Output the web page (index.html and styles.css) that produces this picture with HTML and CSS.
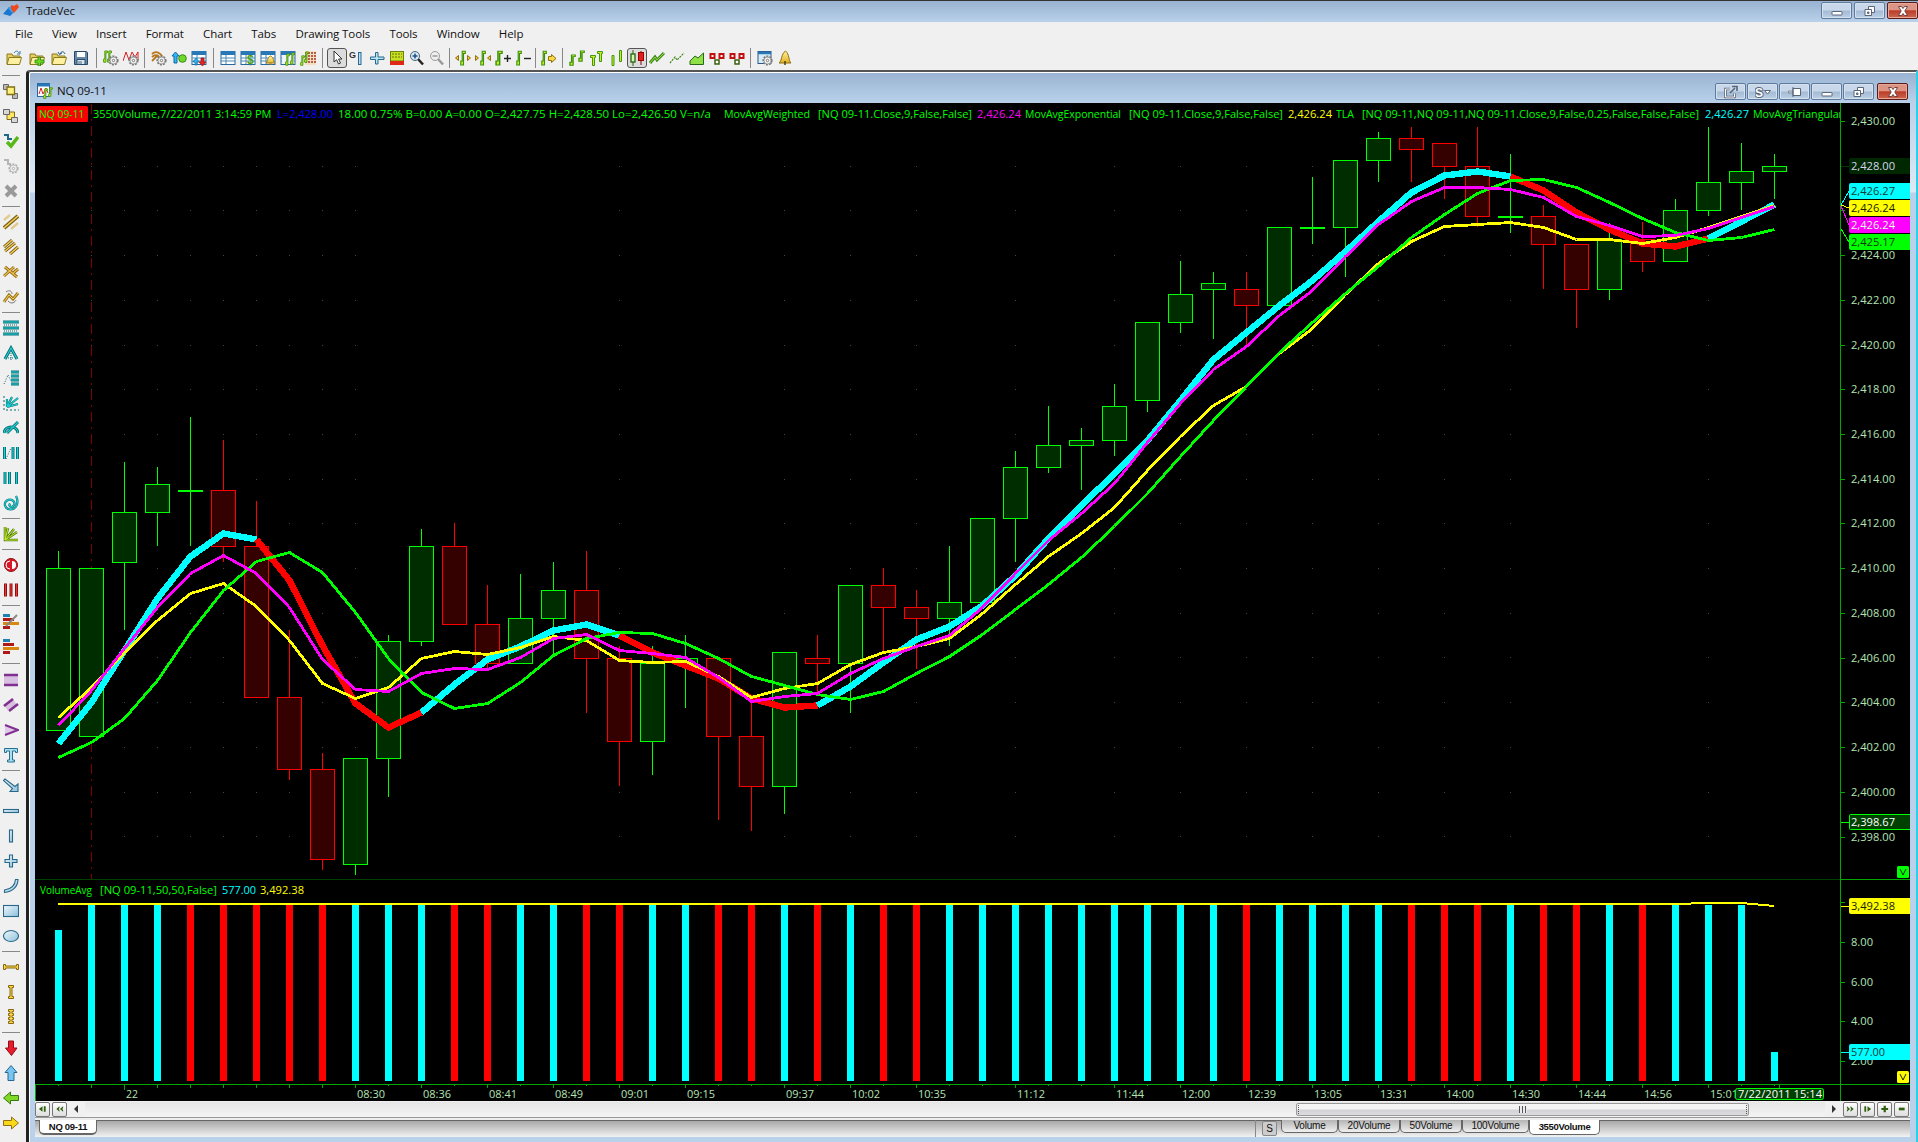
FILE: index.html
```
<!DOCTYPE html>
<html>
<head>
    <meta charset="utf-8">
    <title>TradeVec</title>
    <link rel="stylesheet" href="styles.css">
</head>

<body>
<svg class="defs">
    <linearGradient id="gold" x1="0" y1="0" x2="0" y2="1"><stop offset="0" stop-color="#fff2a0"/><stop offset="1" stop-color="#e0b020"/></linearGradient>
    <linearGradient id="ice" x1="0" y1="0" x2="1" y2="1"><stop offset="0" stop-color="#f0f8fc"/><stop offset="1" stop-color="#8cc0dc"/></linearGradient>
    <symbol id="folder" viewBox="0 0 16 16"><path d="M1 14V4h5l1 2h7v2" fill="#e8d060" stroke="#8a7a20"/><path d="M1 14.5L3 7.5h12.5L13.5 14.5z" fill="#fff0a0" stroke="#8a7a20"/></symbol>
    <symbol id="gear" viewBox="0 0 16 16"><circle cx="10.5" cy="10.5" r="4.3" fill="#eee" stroke="#777" stroke-width="1.6" stroke-dasharray="2 1.1"/><circle cx="10.5" cy="10.5" r="3.5" fill="#f4f4f4" stroke="#888" stroke-width=".8"/><circle cx="10.5" cy="10.5" r="1.2" fill="#fff" stroke="#777"/></symbol>
    <symbol id="bar" viewBox="0 0 6 16" preserveAspectRatio="none"><path d="M.8 11V15h2.700V3.500H5.300V1.200H2.200V11z" fill="#c8f020" stroke="#3c9010" stroke-width="1.100"/></symbol>
    <symbol id="grid" viewBox="0 0 16 16"><rect x="1" y="1.500" width="14" height="13" fill="#fff" stroke="#2868a0"/><rect x="1" y="1" width="14" height="4" fill="#2878b8"/><path d="M1 8h14M1 11h14M6 5v9" stroke="#4888b8"/></symbol>
    <symbol id="min" viewBox="0 0 16 14"><rect x="3" y="7.500" width="10" height="3.500" rx=".5" fill="#fff" stroke="#5a6578"/></symbol>
    <symbol id="restore" viewBox="0 0 16 14"><path d="M6.500 2.500h6v6h-6z" fill="#fff" stroke="#5a6578"/><path d="M3 5.500h6.500v6H3z" fill="#fff" stroke="#5a6578"/><path d="M5.500 8h1.500v1.500H5.500z" fill="#b8cce0" stroke="#5a6578"/></symbol>
    <symbol id="close" viewBox="0 0 16 14"><path d="M3.500 2.500h3L8 4.500l1.500-2h3L9.800 7l2.700 4.500h-3L8 9.500l-1.500 2h-3L6.200 7z" fill="#fff" stroke="#653838" stroke-width=".9"/></symbol>
</svg>

<div class="app">
    <div class="titlebar">
        <svg class="logo" viewBox="0 0 17 14"><path d="M1 11l6-7 6 4-5 5-3-1z" fill="#1878d0"/><path d="M6 5l3-2 4 5-3 2z" fill="#38a0f0"/><path d="M9 2l3 1 3-2 2 3-5 6-3-4z" fill="#f04818"/></svg>
        <span class="title">TradeVec</span>
        <span class="wbtn"><svg><use href="#min"/></svg></span>
        <span class="wbtn"><svg><use href="#restore"/></svg></span>
        <span class="wbtn red"><svg><use href="#close"/></svg></span>
    </div>

    <div class="menu">
        <span>File</span><span>View</span><span>Insert</span><span>Format</span><span>Chart</span><span>Tabs</span><span>Drawing Tools</span><span>Tools</span><span>Window</span><span>Help</span>
    </div>

    <div class="toolbar">
        <i class="wide"><svg viewBox="0 0 16 16"><use href="#folder"/><path d="M8 3c2-3 4-2 5 0m1-2v3h-3" fill="none" stroke="#3878a8"/></svg></i>
        <i class="wide"><svg viewBox="0 0 16 16"><use href="#folder"/><path d="M9 7h2.500v3H15v3h-3.500v3H9v-3H6v-3h3z" fill="#68d820" stroke="#288010" stroke-width=".8"/></svg></i>
        <i class="wide"><svg viewBox="0 0 16 16"><use href="#folder"/><path d="M14 4c-1-3-4-3-5 0m-2-2l1.500 2.500L11 3" fill="none" stroke="#285888"/></svg></i>
        <i class="wide"><svg viewBox="0 0 16 16"><path d="M1.500 1.500h12l1 1v12h-13z" fill="#6888a8" stroke="#284868"/><path d="M4 2h8v5H4z" fill="#fff"/><path d="M4 9.500h8v5H4z" fill="#dde8f0" stroke="#284868"/><path d="M6 11v3M8 11v3" stroke="#486888"/></svg></i>
        <b></b>
        <i><svg viewBox="0 0 16 16"><use href="#bar" x="0" width="5" height="13"/><use href="#bar" x="4" width="5" height="13"/><use href="#gear"/></svg></i>
        <i><svg viewBox="0 0 16 16"><path d="M0 11L3 2l3 8 3-8 3 5 3-5v8" fill="none" stroke="#d82020"/><use href="#gear"/></svg></i>
        <b></b>
        <i><svg viewBox="0 0 16 16"><path d="M1 4c4-4 9-1 11 4M1 7c3-3 6-2 8 1M1 11l6-6" fill="none" stroke="#b87820" stroke-width="1.800"/><use href="#gear"/></svg></i>
        <i><svg viewBox="0 0 16 16"><path d="M4.500 2L8 6H6v7H3V6H1z" fill="#30b8f0" stroke="#1068a8"/><circle cx="11.500" cy="8.500" r="3.800" fill="#70d828" stroke="#388810"/></svg></i>
        <i><svg viewBox="0 0 16 16"><use href="#grid"/><path d="M5 8l3 4H6v3H4v-3H2z" fill="#30b8f0" stroke="#1068a8" stroke-width=".7"/><path d="M10 8h3v4h2l-3.500 4L8 12h2z" fill="#e82020" stroke="#901010" stroke-width=".7"/></svg></i>
        <b class="w"></b>
        <i><svg viewBox="0 0 16 16"><use href="#grid"/></svg></i>
        <i><svg viewBox="0 0 16 16"><use href="#grid"/><text x="7" y="14" class="gl dollar">$</text></svg></i>
        <i><svg viewBox="0 0 16 16"><use href="#grid"/><path d="M6 13c2-1 1-6 4.500-7 3.500 1 2.500 6 4.500 7zM9 14h3" fill="url(#gold)" stroke="#a07810"/></svg></i>
        <i><svg viewBox="0 0 16 16"><use href="#grid"/><rect x="2" y="5" width="12" height="9" fill="#eef4f8"/><use href="#bar" x="5" y="3" width="5" height="13"/><use href="#bar" x="10" y="2" width="5" height="13"/></svg></i>
        <i><svg viewBox="0 0 16 16"><path d="M5 1h11v14H5z" fill="#f4e0c0"/><path d="M5 3h11M5 6h11M5 9h11M5 12h11" stroke="#a83020" stroke-width="1.500" stroke-dasharray="2 1"/><use href="#bar" x="0" y="5" width="5" height="11"/><use href="#bar" x="4" y="1" width="5" height="12"/></svg></i>
        <b class="w"></b>
        <i class="on"><svg viewBox="0 0 16 16"><path d="M5 1v11l2.600-2.300L9.500 14l2-.9-1.900-4.100H13z" fill="#fff" stroke="#333"/></svg></i>
        <i><svg viewBox="0 0 16 16"><text x="0" y="8" class="gl">G</text><rect x="9.500" y="2.500" width="2.500" height="12" fill="#c0dcf0" stroke="#286890"/></svg></i>
        <i><svg viewBox="0 0 16 16"><path d="M6.500 2.500h2.500v4.500h6v2.500h-6v4.500H6.500V9.500H1.500V7h5z" fill="#b8e4f4" stroke="#28688c"/></svg></i>
        <i><svg viewBox="0 0 16 16"><rect x="1.500" y="1.500" width="13" height="9.500" fill="#c8e020" stroke="#688010"/><path d="M3 4h10M3 7h10" stroke="#607010" stroke-dasharray="2 1"/><rect x="1" y="11" width="14" height="4" fill="#e02818"/></svg></i>
        <i><svg viewBox="0 0 16 16"><path d="M9 9l5 5.500" stroke="#222" stroke-width="2.500"/><circle cx="6" cy="6" r="4.500" fill="#d8ecf8" stroke="#486070"/><path d="M3.500 6h5M6 3.500v5" stroke="#205080" stroke-width="1.500"/></svg></i>
        <i><svg viewBox="0 0 16 16"><path d="M9 9l5 5.500" stroke="#999" stroke-width="2.500"/><circle cx="6" cy="6" r="4.500" fill="#eee" stroke="#999"/><path d="M3.500 6h5" stroke="#999" stroke-width="1.500"/></svg></i>
        <b class="s"></b>
        <i><svg viewBox="0 0 16 16"><path d="M3.500 5.500v5L.5 8zM12.500 5.500v5l3-2.500z" fill="#f0c830" stroke="#907010"/><use href="#bar" x="5" width="6" height="16"/></svg></i>
        <i><svg viewBox="0 0 16 16"><path d="M.5 5.500v5L3.500 8zM15.500 5.500v5l-3-2.500z" fill="#f0c830" stroke="#907010"/><use href="#bar" x="5" width="6" height="16"/></svg></i>
        <i><svg viewBox="0 0 16 16"><use href="#bar" x="0" width="8" height="16"/><path d="M9 8.500h7M12.500 5v7" stroke="#222" stroke-width="1.400"/></svg></i>
        <i><svg viewBox="0 0 16 16"><use href="#bar" x="1" width="6" height="16"/><path d="M9 8.500h7" stroke="#222" stroke-width="1.400"/></svg></i>
        <b class="s"></b>
        <i><svg viewBox="0 0 16 16"><use href="#bar" x="0" width="6" height="16"/><path d="M7.500 6.500h3v-2l4.500 4-4.500 4v-2h-3z" fill="#f8d840" stroke="#907010"/></svg></i>
        <b></b>
        <i><svg viewBox="0 0 16 16"><use href="#bar" x="0" y="4" width="7" height="12"/><use href="#bar" x="9" y="0" width="7" height="12"/></svg></i>
        <i><svg viewBox="0 0 16 16"><path d="M1.500 5.500h5v2h-1v8H3.500v-8h-2zM8.500 1.500h5v2h-1v8h-2v-8h-2z" fill="#c8f020" stroke="#409810"/></svg></i>
        <i><svg viewBox="0 0 16 16"><path d="M3 5.500h2v10H3zM10.500.5h2v11h-2z" fill="#c8f020" stroke="#409810"/></svg></i>
        <i class="on"><svg viewBox="0 0 16 16"><path d="M4 0v16" stroke="#286010"/><rect x="2" y="4" width="4" height="8" fill="#d8f8b0" stroke="#286010" stroke-width="1.300"/><path d="M12 1v14" stroke="#800"/><rect x="9.500" y="2.500" width="5" height="8" fill="#e02020" stroke="#900"/></svg></i>
        <i><svg viewBox="0 0 16 16"><path d="M1 13l5-6 2 3 7-7" fill="none" stroke="#408818" stroke-width="3"/><path d="M1 13l5-6 2 3 7-7" fill="none" stroke="#90e040"/></svg></i>
        <i><svg viewBox="0 0 16 16"><path d="M1 13l5-6 2 3 7-7" fill="none" stroke="#408818" stroke-width="1.200" stroke-dasharray="2 1"/></svg></i>
        <i><svg viewBox="0 0 16 16"><path d="M1 14.500V11l5-5 3 2 5.500-5v11.500z" fill="#90e048" stroke="#286818"/></svg></i>
        <i><svg viewBox="0 0 16 16"><path d="M1.500 4h4v4h-4zM10.500 4h4v4h-4z" fill="#fff" stroke="#c01010" stroke-width="2"/><path d="M6 10h4v4H6z" fill="#fff" stroke="#386010" stroke-width="1.500"/></svg></i>
        <i><svg viewBox="0 0 16 16"><path d="M1.500 4h4v4h-4zM10.500 4h4v4h-4z" fill="#fff" stroke="#c01010" stroke-width="2"/><path d="M6 10h4v4H6z" fill="#fff" stroke="#386010" stroke-width="1.500"/></svg></i>
        <b></b>
        <i><svg viewBox="0 0 16 16"><rect x="1" y="1.500" width="13" height="12" fill="#d8ecf8" stroke="#285888"/><path d="M1 3h13" stroke="#2878b8" stroke-width="2.500"/><use href="#gear"/></svg></i>
        <i><svg viewBox="0 0 16 16"><path d="M2 13c3-2 2-9 6.500-12 4 3 3 10 5.500 12z" fill="url(#gold)" stroke="#907010"/><path d="M8 11v4" stroke="#504010" stroke-width="1.500"/></svg></i>
    </div>

    <div class="main">
        <div class="side">
            <b></b>
            <i><svg viewBox="0 0 16 16"><path d="M.5 1.500h5v5h-5zM9.500 10.500h5v5h-5z" fill="#bbb" stroke="#666"/><path d="M4 4h7.500v7.500H4z" fill="#fff080" stroke="#807010" stroke-width="1.300"/></svg></i>
            <i><svg viewBox="0 0 16 16"><path d="M4 4h7.500v7.500H4z" fill="#ffe860" stroke="#807010"/><path d="M.5 1.500h6v5h-6zM8.500 9.500h6v5h-6z" fill="#d8d8d8" stroke="#666"/></svg></i>
            <i><svg viewBox="0 0 16 16"><path d="M1 2h4v4h4" fill="none" stroke="#206888" stroke-width="2"/><path d="M4 9l4 4 7-9" fill="none" stroke="#58b818" stroke-width="3.500"/></svg></i>
            <i class="off"><svg viewBox="0 0 16 16"><path d="M1 2h4v4h3" fill="none" stroke="#888" stroke-width="2"/><use href="#gear"/></svg></i>
            <i><svg viewBox="0 0 16 16"><path d="M3 3l10 10M13 3L3 13" stroke="#999" stroke-width="4"/></svg></i>
            <b></b>
            <i><svg viewBox="0 0 16 16"><path d="M1 6l6-5M8 15l7-6" stroke="#e0cc90" stroke-width="2.500"/><path d="M1 14L15 2" stroke="#806010" stroke-width="4"/><path d="M1 14L15 2" stroke="#f0d060" stroke-width="1.500"/></svg></i>
            <i><svg viewBox="0 0 16 16"><path d="M1 8l8-7M2 12l10-8M7 15l8-7" stroke="#806010" stroke-width="3"/><path d="M1 8l8-7M2 12l10-8M7 15l8-7" stroke="#f0d060" stroke-width="1.200"/></svg></i>
            <i><svg viewBox="0 0 16 16"><path d="M2 3l12 10M1 12l10-9M9 10l6-5" stroke="#906810" stroke-width="3"/><path d="M2 3l12 10M1 12l10-9M9 10l6-5" stroke="#e8c050" stroke-width="1.200"/></svg></i>
            <i><svg viewBox="0 0 16 16"><path d="M1 13l5-7 4 4 5-6" fill="none" stroke="#a07818" stroke-width="3"/><path d="M1 13l5-7 4 4 5-6" fill="none" stroke="#f0d060"/><path d="M3 3c4-3 6 0 6 2M5 12c4 4 7 1 8-1" fill="none" stroke="#777"/></svg></i>
            <b></b>
            <i><svg viewBox="0 0 16 16"><path d="M0 2h16M0 8h16M0 14h16" class="o"/><path d="M0 2h16M0 8h16M0 14h16" class="n"/><path d="M1 5h14M1 11h14" stroke="#086870" stroke-dasharray="1 1"/></svg></i>
            <i><svg viewBox="0 0 16 16"><path d="M2 14L8 3l6 11" class="o"/><path d="M2 14L8 3l6 11" class="n"/><path d="M8 8v7M5 13h6" stroke="#086870" stroke-dasharray="1 1"/></svg></i>
            <i><svg viewBox="0 0 16 16"><path d="M8 2h8M8 6h8M8 10h8M8 14h8" class="o"/><path d="M8 2h8M8 6h8M8 10h8M8 14h8" class="n"/><path d="M1 14l4-9 3 6" fill="none" stroke="#086870" stroke-dasharray="1 1.500"/></svg></i>
            <i><svg viewBox="0 0 16 16"><path d="M4 12V4M4 12l5-10M4 12L15 3M4 12l11-3" class="o thin"/><path d="M4 12V4M4 12l5-10M4 12L15 3M4 12l11-3" class="n"/><path d="M1 1v14h15" fill="none" stroke="#086870" stroke-dasharray="2 2"/></svg></i>
            <i><svg viewBox="0 0 16 16"><path d="M1 13c1-8 13-8 14 0M4 13L15 2" class="o"/><path d="M1 13c1-8 13-8 14 0M4 13L15 2" class="n"/></svg></i>
            <i><svg viewBox="0 0 16 16"><path d="M1.500 2v12M10 2v12M14.500 2v12" class="o"/><path d="M1.500 2v12M10 2v12M14.500 2v12" class="n"/><path d="M3 14l5-11" stroke="#086870" stroke-dasharray="1 1.500"/></svg></i>
            <i><svg viewBox="0 0 16 16"><path d="M2 2v12M6.500 2v12M13.500 2v12" class="o"/><path d="M2 2v12M6.500 2v12M13.500 2v12" class="n"/></svg></i>
            <i><svg viewBox="0 0 16 16"><path d="M13 1c3.500 7 0 13.500-5.500 13.500S0 8 4 5.500s9 1 7 4.500-6 1.500-4-1.500" class="o thin"/><path d="M13 1c3.500 7 0 13.500-5.500 13.500S0 8 4 5.500s9 1 7 4.500-6 1.500-4-1.500" class="n"/></svg></i>
            <b></b>
            <i><svg viewBox="0 0 16 16"><path d="M2 1v13h13M2 14L5 2M2 14l9-11M2 14l12-8" fill="none" stroke="#508010" stroke-width="2.500"/><path d="M2 1v13h13M2 14L5 2M2 14l9-11M2 14l12-8" fill="none" stroke="#c8e830"/></svg></i>
            <b></b>
            <i><svg viewBox="0 0 16 16"><circle cx="8" cy="8" r="6.500" fill="#d81828" stroke="#901010"/><path d="M9 4a4 4 0 0 1 0 8z" fill="#fff"/><path d="M7 4a4 4 0 0 0 0 8" fill="none" stroke="#fff"/></svg></i>
            <i><svg viewBox="0 0 16 16"><path d="M2.500 1.500v13M8 1.500v13M13.500 1.500v13" stroke="#901010" stroke-width="3"/><path d="M2.500 2v12M8 2v12M13.500 2v12" stroke="#e83838"/></svg></i>
            <b></b>
            <i><svg viewBox="0 0 16 16"><path d="M0 2.500h7" stroke="#2080b0" stroke-width="3"/><path d="M0 6.500h11M0 14.500h7" stroke="#b01818" stroke-width="3"/><path d="M0 10.500h16" stroke="#d88810" stroke-width="3"/><path d="M3 13L14 2" stroke="#888" stroke-width="2"/></svg></i>
            <i><svg viewBox="0 0 16 16"><path d="M0 2.500h7" stroke="#2080b0" stroke-width="3"/><path d="M0 6.500h11M0 14.500h7" stroke="#b01818" stroke-width="3"/><path d="M0 10.500h16" stroke="#d88810" stroke-width="3"/></svg></i>
            <b class="l"></b>
            <i><svg viewBox="0 0 16 16"><path d="M1 3h14v10H1z" fill="#d8c0e0"/><path d="M1 3h14M1 13h14" stroke="#803090" stroke-width="2.500"/></svg></i>
            <i><svg viewBox="0 0 16 16"><path d="M3 11l9-6" stroke="#d8c0e0" stroke-width="6"/><path d="M1 9l9-7M6 14l9-7" stroke="#803090" stroke-width="2.600"/></svg></i>
            <i><svg viewBox="0 0 16 16"><path d="M2 3l13 5-13 5" fill="#e0c8e8" stroke="#803090" stroke-width="2"/></svg></i>
            <i><svg viewBox="0 0 16 16"><path d="M1.500 1.500h13v4h-2v-1.500H9.500v9h2v2h-7v-2h2V4H3.500v1.500h-2z" fill="#a8e0f0" stroke="#287090"/></svg></i>
            <b></b>
            <i class="blue"><svg viewBox="0 0 16 16"><path d="M2 1L.5 2.500l9 8-2.500 3h8V6l-3 2.500z"/></svg></i>
            <i class="blue"><svg viewBox="0 0 16 16"><rect x=".5" y="6.500" width="15" height="3"/></svg></i>
            <i class="blue"><svg viewBox="0 0 16 16"><rect x="6.500" y="2" width="3" height="12"/></svg></i>
            <i class="blue"><svg viewBox="0 0 16 16"><path d="M6.500 2h3v4.500H14v3H9.500V14h-3V9.500H2v-3h4.500z"/></svg></i>
            <i class="blue"><svg viewBox="0 0 16 16"><path d="M12.500 1.500h2.500C15 9 9 14 1.500 14.500v-2.500C8 11 12 8 12.500 1.500z"/></svg></i>
            <i class="blue"><svg viewBox="0 0 16 16"><rect x=".5" y="2.500" width="15" height="11"/></svg></i>
            <i class="blue"><svg viewBox="0 0 16 16"><ellipse cx="8" cy="8" rx="7.500" ry="5.500"/></svg></i>
            <b></b>
            <i class="gold"><svg viewBox="0 0 16 16"><path d="M.5 5.500h2v1.500h11V5.500h2v5h-2V9h-11v1.500h-2z"/></svg></i>
            <i class="gold"><svg viewBox="0 0 16 16"><path d="M5.500 1.500h5v2H9v9h1.500v2h-5v-2H7v-9H5.500z"/></svg></i>
            <i class="gold"><svg viewBox="0 0 16 16"><path d="M5.500.5h5v2H9v2h1.500v2H9v2h1.500v2H9v2h1.500v2h-5v-2H7v-2H5.500v-2H7v-2H5.500v-2H7v-2H5.500z"/></svg></i>
            <b></b>
            <i><svg viewBox="0 0 16 16"><path d="M5.500 1h5v7H14l-5.500 7.500L2.500 8h3z" fill="#e81c2c" stroke="#901018"/></svg></i>
            <i><svg viewBox="0 0 16 16"><path d="M8 .5l6 7h-3v8H5v-8H2z" fill="#78c4f0" stroke="#286890"/></svg></i>
            <i><svg viewBox="0 0 16 16"><path d="M.5 8l7-6v3.500h8v5h-8V14z" fill="#80d828" stroke="#387810"/></svg></i>
            <i><svg viewBox="0 0 16 16"><path d="M15.500 8l-7-6v3.500h-8v5h8V14z" fill="#f8d818" stroke="#907010"/></svg></i>
        </div>

        <div class="child">
            <div class="childbar">
                <svg class="chartlogo" viewBox="0 0 16 16"><rect x=".5" y=".5" width="12" height="13" fill="#fff" stroke="#2868a0"/><path d="M1 2h12" stroke="#2878b8" stroke-width="3"/><path d="M2 11l2-6 2 6 3-6 2 5" fill="none" stroke="#d82020"/><use href="#bar" x="6" y="5" width="5" height="11"/><use href="#bar" x="11" y="4" width="5" height="10"/></svg>
                <span class="title">NQ 09-11</span>
                <span class="wbtn"><svg viewBox="0 0 16 14"><path d="M7 4H2.500v8h9V8.500" fill="none" stroke="#5a6578" stroke-width="2.500"/><path d="M7 4H2.500v8h9V8.500" fill="none" stroke="#fff"/><path d="M7 8l5-5M9 1.500h5V6" fill="none" stroke="#5a6578" stroke-width="1.600"/></svg></span>
                <span class="wbtn"><svg viewBox="0 0 16 14"><text x="0" y="11.500" class="s-glyph">S</text><path d="M9.500 5.500h6l-3 3.500z" fill="#fff" stroke="#5a6578"/></svg></span>
                <span class="wbtn"><svg viewBox="0 0 16 14"><path d="M1 7h5" stroke="#5a6578" stroke-width="2.500"/><path d="M1.500 7h5" stroke="#fff"/><path d="M6 3.500h7.500v7H6z" fill="#fff" stroke="#5a6578"/><path d="M6 2v10" stroke="#5a6578"/></svg></span>
                <span class="wbtn"><svg><use href="#min"/></svg></span>
                <span class="wbtn"><svg><use href="#restore"/></svg></span>
                <span class="wbtn red"><svg><use href="#close"/></svg></span>
            </div>

            <svg id="chart" viewBox="35 103 1875 998"></svg>

            <div class="scroll">
                <span class="nav"><svg viewBox="0 0 10 8"><path d="M5 1v6L1 4zM6.500 1h2v6h-2z"/></svg></span>
                <span class="nav"><svg viewBox="0 0 10 8"><path d="M5 1L1.500 4 5 7V5L4 4l1-1zM9 1L5.500 4 9 7V5L8 4l1-1z"/></svg></span>
                <svg class="arrow" viewBox="0 0 6 8"><path d="M5 0v8L1 4z"/></svg>
                <span class="track"><span class="thumb"><em></em><u></u><em></em></span></span>
                <svg class="arrow" viewBox="0 0 6 8"><path d="M1 0v8l4-4z"/></svg>
                <span class="nav"><svg viewBox="0 0 10 8"><path d="M1 1l3.500 3L1 7V5l1-1-1-1zM5 1l3.500 3L5 7V5l1-1-1-1z"/></svg></span>
                <span class="nav"><svg viewBox="0 0 10 8"><path d="M1.500 1h2v6h-2zM5 1v6l4-3z"/></svg></span>
                <span class="nav"><svg viewBox="0 0 10 8"><path d="M4 .5h2.500V3H9v2H6.500v2.500H4V5H1.500V3H4z"/></svg></span>
                <span class="nav"><svg viewBox="0 0 10 8"><path d="M2 2.500h6.500v3H2z"/></svg></span>
            </div>

            <div class="tabs">
                <span class="tab active first">NQ 09-11</span>
                <span class="split"></span>
                <span class="sbtn">S</span>
                <span class="tab t1">Volume</span>
                <span class="tab t2">20Volume</span>
                <span class="tab t2">50Volume</span>
                <span class="tab t3">100Volume</span>
                <span class="tab active t4">3550Volume</span>
            </div>
        </div>
    </div>
</div>
<script src="chart.js"></script>
</body>
</html>
```
FILE: styles.css
```
body {
    margin: 0;
    background: #f0f0f0;
    font-family: "Open Sans", "Noto Sans", sans-serif;
    font-size: 11.5px;
    color: #111;
    overflow: hidden;
}

.defs {
    position: absolute;
    width: 0;
    height: 0;
}

.app {
    width: 1918px;
    height: 1142px;
    display: flex;
    flex-direction: column;
}

.titlebar {
    height: 21px;
    flex: none;
    border-top: 1px solid #333;
    background: linear-gradient(#98b2d0, #b9d1ea);
    display: flex;
    align-items: flex-start;
    gap: 2px;
}

.logo {
    width: 17px;
    height: 14px;
    margin: 2px 5px 0 2px;
}

.title {
    flex: 1;
    font-size: 11.5px;
    line-height: 20px;
    letter-spacing: -0.1px;
}

.wbtn {
    width: 29px;
    height: 15px;
    margin-top: 1px;
    border: 1px solid #5f7a9c;
    border-radius: 2px;
    box-shadow: inset 0 0 0 1px #d4e2f0;
    background: linear-gradient(#c8d8ea 48%, #a3bad4 52%, #bdd1e6);
    display: flex;
    justify-content: center;
    align-items: center;
}

.wbtn svg {
    width: 16px;
    height: 14px;
}

.red {
    border-color: #5c1a1a;
    box-shadow: inset 0 0 0 1px #e8a898;
    background: linear-gradient(#dc9484 45%, #bc3c28 52%, #cc6850);
}

.s-glyph {
    font: bold 12px "Liberation Sans", sans-serif;
    fill: #fff;
    stroke: #5a6578;
    stroke-width: 2px;
    paint-order: stroke;
}

.menu {
    height: 23px;
    flex: none;
    display: flex;
    gap: 19.25px;
    padding-left: 15px;
    line-height: 23px;
    letter-spacing: -0.1px;
}

.toolbar {
    height: 25px;
    flex: none;
    display: flex;
    align-items: center;
    padding-left: 3px;
}

.toolbar i {
    width: 20px;
    height: 20px;
    flex: none;
    display: flex;
    align-items: center;
    justify-content: center;
    box-sizing: border-box;
}

.toolbar i.wide { width: 22.4px; }

.toolbar i.on {
    border: 1px solid #555;
    border-radius: 3px;
    background: #dcdcdc;
}

.toolbar svg, .side svg {
    width: 16px;
    height: 16px;
    flex: none;
}

.toolbar b {
    width: 1px;
    height: 20px;
    margin: 0 3.5px;
    background: #888;
}

.toolbar b.s { margin: 0 2.5px; }
.toolbar b.w { margin: 0 4px; }

.gl {
    font: bold 9px "Liberation Sans", sans-serif;
    fill: #333;
}

.dollar {
    font-size: 12px;
    fill: #48a010;
}

.main {
    flex: 1;
    display: flex;
    min-height: 0;
}

.side {
    width: 26px;
    flex: none;
    display: flex;
    flex-direction: column;
    padding-top: 2px;
}

.side i {
    height: 25px;
    flex: none;
    padding-left: 3px;
    display: flex;
    align-items: center;
}

.side b {
    width: 18px;
    height: 1px;
    margin: 2.5px 0 2.5px 2px;
    flex: none;
    background: #888;
}

.side b.l { margin: 5px 0 3px 2px; }
.off { opacity: 0.55; }
.o { fill: none; stroke: #087078; stroke-width: 3; }
.o.thin { stroke-width: 2.2; }
.n { fill: none; stroke: #20d0d0; stroke-width: 1.1; }
.blue svg { fill: url(#ice); stroke: #286888; stroke-width: 1.1; }
.gold svg { fill: #f8d848; stroke: #886810; }

.child {
    flex: 1;
    min-width: 0;
    box-sizing: border-box;
    padding: 0 6px 0 6px;
    border-style: solid;
    border-width: 2px 2px 0 3px;
    border-color: #555 #2ad0e8 #555 #222;
    border-top-left-radius: 4px;
    background: linear-gradient(#98b2d0, #b9d1ea 30px, #dfe9f5 120px, #b9d1ea 121px);
    display: flex;
    flex-direction: column;
    box-shadow: inset 1px 1px 0 #fff;
}

.childbar {
    height: 30px;
    flex: none;
    background: linear-gradient(#9ab4d2, #b9d1ea);
    margin-top: 1px;
    display: flex;
    gap: 1px;
}

.childbar .wbtn { margin-top: 10px; }
.childbar .wbtn:last-child { margin: 10px 2px 0 2px; }

.childbar .title {
    line-height: 35px;
    padding-left: 3px;
}

.chartlogo {
    width: 16px;
    height: 16px;
    margin: 10px 0 0 2px;
}

#chart {
    width: 1875px;
    height: 998px;
    flex: none;
    background: #000;
    display: block;
}

#chart text {
    font-family: "Open Sans", "Noto Sans", sans-serif;
    font-size: 11px;
}

.scroll {
    height: 17px;
    flex: none;
    background: #f0f0f0;
    border-bottom: 1px solid #999;
    display: flex;
    align-items: center;
    gap: 2px;
    box-sizing: border-box;
    padding-right: 1px;
}

.nav {
    width: 13px;
    height: 13px;
    border: 1px solid #777;
    border-radius: 2px;
    background: linear-gradient(#fff, #ddd);
    display: flex;
    align-items: center;
    justify-content: center;
}

.nav svg {
    width: 9px;
    height: 8px;
    fill: #306010;
}

.arrow {
    width: 6px;
    height: 8px;
    margin: 0 4px;
    fill: #333;
}

.track {
    flex: 1;
    background: linear-gradient(#e6e6e6, #f4f4f4);
    height: 15px;
}

.thumb {
    width: 453px;
    height: 13px;
    margin: 1px 0 0 1211px;
    border: 1px solid #999;
    border-radius: 2px;
    background: linear-gradient(#f4f4f4 48%, #d2d2d6 52%, #dcdcde);
    display: flex;
    justify-content: space-between;
    align-items: center;
    box-sizing: border-box;
    padding: 0 1px;
}

.thumb em {
    height: 9px;
    border-left: 1px dotted #555;
}

.thumb u {
    width: 8px;
    height: 7px;
    background: repeating-linear-gradient(90deg, #555 0 1px, #eee 1px 3px);
}

.tabs {
    height: 19px;
    flex: none;
    display: flex;
    box-sizing: border-box;
    border-top: 2px solid #eee;
    padding-left: 4px;
    background: linear-gradient(#a4a4a4, #f2f2f2);
    box-shadow: inset 0 1px 0 #666;
    font: 10px/13px "Liberation Sans", Arial, sans-serif;
    letter-spacing: -0.2px;
}

.tab {
    height: 13px;
    box-sizing: border-box;
    text-align: center;
    background: linear-gradient(#b4b4b4, #f0f0f0);
    border: 1px solid #666;
    border-top: 0;
    border-radius: 0 0 5px 5px;
    line-height: 11px;
}

.active {
    height: 15px;
    line-height: 13px;
    background: #fff;
    font-weight: bold;
    font-size: 9.5px;
    letter-spacing: -0.3px;
}

.first {
    width: 58px;
    border-bottom-width: 2px;
}

.split {
    width: 1158px;
    border-right: 1px solid #888;
}

.sbtn {
    width: 13px;
    height: 13px;
    margin: 1px 4px 0 6px;
    border: 1px solid #888;
    border-radius: 2px;
    background: #ccc;
    text-align: center;
}

.t1 { width: 57px; }
.t2 { width: 62px; }
.t3 { width: 67px; }
.t4 { width: 71px; }
```
FILE: chart.js
```
var svg = document.getElementById('chart');
var NS = 'http://www.w3.org/2000/svg';
var LIME = '#00ff00', RED = '#ff0000', CYAN = '#00ffff', YELLOW = '#ffff00', PINK = '#ff00ff';
var LABEL = '#b4e4b4';

function add(name, attrs, text) {
    var el = document.createElementNS(NS, name);
    for (var k in attrs) el.setAttribute(k, attrs[k]);
    if (text) el.textContent = text;
    svg.appendChild(el);
    return el;
}
function line(x1, y1, x2, y2, color, w) {
    add('line', {x1: x1, y1: y1, x2: x2, y2: y2, stroke: color, 'stroke-width': w || 1, 'shape-rendering': 'crispEdges'});
}
function box(x, y, w, h, fill, stroke) {
    add('rect', {x: x, y: y, width: w, height: h, fill: fill, stroke: stroke || 'none', 'shape-rendering': 'crispEdges'});
}
function label(s, x, y, w, color) {
    add('text', {x: x, y: y, fill: color, textLength: w, lengthAdjust: 'spacingAndGlyphs'}, s);
}
function cx(i) { return 58.5 + 33 * i; }

// color, high, body top, body bottom, low
var candles = [
    ['g',551,568,730,730], ['g',568,568,736,736], ['g',462,512,562,630], ['g',467,484,512,546],
    ['g',417,490,491,546], ['r',440,490,546,562], ['r',501,546,697,697], ['r',630,697,769,780],
    ['r',753,769,859,870], ['g',758,758,864,875], ['g',635,641,758,797], ['g',529,546,641,646],
    ['r',523,546,624,624], ['r',585,624,663,668], ['g',574,618,663,663], ['g',562,590,618,655],
    ['r',551,590,658,713], ['r',646,658,741,786], ['g',646,663,741,775], ['g',635,658,663,708],
    ['r',658,658,736,820], ['r',697,736,786,831], ['g',652,652,786,814], ['r',635,658,663,693],
    ['g',585,585,663,713], ['r',568,585,607,652], ['r',590,607,618,669], ['g',546,602,618,646],
    ['g',518,518,602,602], ['g',451,467,518,562], ['g',406,445,467,473], ['g',428,440,445,490],
    ['g',384,406,440,456], ['g',322,322,400,412], ['g',261,294,322,333], ['g',272,283,289,339],
    ['r',272,289,305,345], ['g',227,227,305,305], ['g',177,227,228,244], ['g',160,160,227,277],
    ['g',132,138,160,182], ['r',127,138,149,182], ['r',143,143,166,199], ['r',127,166,216,227],
    ['g',154,216,217,233], ['r',205,216,244,289], ['r',244,244,289,328], ['g',223,239,289,300],
    ['r',222,239,261,272], ['g',199,210,261,261], ['g',127,182,210,216], ['g',143,171,182,210],
    ['g',154,166,171,199]
];
var ema = [717,687,652,620,593,583,606,640,683,698,687,658,651,654,647,636,640,660,662,661,676,697,688,683,664,652,646,638,613,584,556,533,507,470,436,405,386,353,328,294,263,241,226,224,222,227,239,239,243,237,227,216,205];
var wma = [725,690,648,607,573,555,573,607,659,689,691,673,668,669,657,638,634,650,653,657,677,701,696,693,673,658,646,635,607,573,540,513,483,442,403,369,346,315,290,256,224,201,187,187,189,197,216,225,236,235,228,217,206];
var tri = [757,742,718,680,632,590,561,552,572,612,658,692,708,703,682,655,638,632,633,643,658,676,685,694,699,691,673,656,634,609,584,557,526,493,456,420,386,352,322,293,266,237,214,193,180,179,187,202,218,232,240,237,229];
var tla = [743,702,650,598,556,533,539,580,645,703,727,712,684,659,646,630,624,635,652,665,678,698,707,705,686,662,639,626,605,575,538,505,473,440,400,359,332,305,280,251,221,192,175,171,176,190,212,229,243,246,238,221,204];
var times = {2:'22',9:'08:30',11:'08:36',13:'08:41',15:'08:49',17:'09:01',19:'09:15',22:'09:37',24:'10:02',26:'10:35',29:'11:12',32:'11:44',34:'12:00',36:'12:39',38:'13:05',40:'13:31',42:'14:00',44:'14:30',46:'14:44',48:'14:56',50:'15:01'};

// grid dots
[1,2,3,4,5,6,7,8,9,17,22,24,26,29,32,34,36,38,40,42,44,50].forEach(function (i) {
    for (var n = 1; n < 17; n++) box(cx(i) - .5, Math.round(121 + 44.7 * n), 1, 1, '#444');
});

// session break
add('line', {x1: 91.5, x2: 91.5, y1: 104, y2: 879, stroke: '#800000', 'stroke-dasharray': '10 5 2 5', 'shape-rendering': 'crispEdges'});

candles.forEach(function (c, i) {
    var col = c[0] == 'g' ? LIME : RED, x = cx(i);
    line(x, c[1], x, c[4], col);
    if (c[3] - c[2] < 3) box(x - 12.5, c[2], 25, 2, col);
    else box(x - 12, c[2] + .5, 24, c[3] - c[2], c[0] == 'g' ? '#002d00' : '#350000', col);
});

function curve(data, from, to, color, w) {
    var pts = [];
    for (var i = from; i <= to; i++) pts.push(cx(i) + ',' + (data[i] + .5));
    add('polyline', {points: pts.join(' '), fill: 'none', stroke: color, 'stroke-width': w, 'shape-rendering': 'crispEdges'});
}
[[0,6,CYAN],[6,11,RED],[11,17,CYAN],[17,23,RED],[23,44,CYAN],[44,50,RED],[50,52,CYAN]].forEach(function (s) {
    curve(tla, s[0], s[1], s[2], 6.4);
});
curve(ema, 0, 52, YELLOW, 2.8);
curve(tri, 0, 52, LIME, 2.8);
curve(wma, 0, 52, PINK, 2.8);

// volume
candles.forEach(function (c, i) {
    var top = i == 0 ? 930 : i == 52 ? 1052 : 905;
    box(cx(i) - 3.5, top, 7, 1081 - top, c[0] == 'g' && i != 4 ? CYAN : RED);
});
add('polyline', {points: '58,904 1675,904 1708,903 1741,903 1774,906', fill: 'none', stroke: YELLOW, 'stroke-width': 2, 'shape-rendering': 'crispEdges'});

// header
add('rect', {x: 37, y: 106, width: 51, height: 16, rx: 1.5, fill: RED});
[
    ['NQ 09-11', 39, 45.5, LIME], ['3550Volume,7/22/2011 3:14:59 PM', 93, 178.5, LIME],
    ['L=2,428.00', 277, 56, '#0000ff'],
    ['18.00 0.75% B=0.00 A=0.00 O=2,427.75 H=2,428.50 Lo=2,426.50 V=n/a', 338, 373, LIME],
    ['MovAvgWeighted', 724, 86, LIME], ['[NQ 09-11.Close,9,False,False]', 818, 154, LIME], ['2,426.24', 977, 44, PINK],
    ['MovAvgExponential', 1025, 96, LIME], ['[NQ 09-11.Close,9,False,False]', 1129, 154, LIME], ['2,426.24', 1288, 44, YELLOW],
    ['TLA', 1336, 18, LIME], ['[NQ 09-11,NQ 09-11,NQ 09-11.Close,9,False,0.25,False,False,False]', 1362, 337, LIME],
    ['2,426.27', 1705, 44, CYAN], ['MovAvgTriangular', 1753, 90, LIME]
].forEach(function (t) { label(t[0], t[1], 118, t[2], t[3]); });
box(1840, 103, 70, 776, '#000');
label('VolumeAvg', 40, 894, 52, LIME);
label('[NQ 09-11,50,50,False]', 100, 894, 117, LIME);
label('577.00', 222, 894, 34, CYAN);
label('3,492.38', 260, 894, 44, YELLOW);

// axes
var AXIS = '#00a800';
line(35, 879.5, 1840, 879.5, '#004000');
line(1840, 879.5, 1910, 879.5, AXIS);
line(1840.5, 103, 1840.5, 1101, AXIS);
line(35, 1084.5, 1910, 1084.5, AXIS);
line(35.5, 1084, 35.5, 1101, AXIS);
for (var p = 2430; p >= 2398; p -= 2) {
    var y = Math.round(121 + (2430 - p) * 22.36);
    line(1841, y + .5, 1845, y + .5, AXIS);
    if (p != 2426) label('2,' + (p - 2000) + '.00', 1851, y + 4, 44, LABEL);
}
line(1841, 902.5, 1845, 902.5, AXIS);
[[8,942],[6,982],[4,1021],[2,1061]].forEach(function (v) {
    line(1841, v[1] + .5, 1845, v[1] + .5, AXIS);
    label(v[0] + '.00', 1851, v[1] + 4, 22, LABEL);
});
for (var i = 0; i < 53; i++) {
    line(cx(i), 1085, cx(i), i == 2 ? 1090 : times[i] || (i > 0 && i < 9) ? 1088 : 1086, AXIS);
    if (times[i]) label(times[i], cx(i) + 1.5, 1098, i == 2 ? 12 : 28, LABEL);
}
line(1779.5, 1085, 1779.5, 1088, AXIS);

// value tags
function tag(s, y, fill, color, stroke) {
    add('rect', {x: 1849.5, y: y + .5, width: 64, height: 15, rx: 1, fill: fill, stroke: stroke || fill});
    label(s, 1851, y + 12, s.length > 6 ? 44 : 34, color);
}
tag('2,428.00', 158, '#002800', '#d8d4ec');
tag('2,426.27', 183, CYAN, '#103838');
tag('2,426.24', 200, YELLOW, '#202000');
tag('2,426.24', 217, PINK, '#e8ffe0');
tag('2,425.17', 234, LIME, '#083808');
tag('2,398.67', 814, '#004000', '#fff', LIME);
tag('3,492.38', 898, YELLOW, '#202000');
tag('577.00', 1044, CYAN, '#103838');
[[205,191,CYAN],[205,208,YELLOW],[206,225,PINK],[229,242,LIME]].forEach(function (l) {
    add('line', {x1: 1841, y1: l[0], x2: 1849, y2: l[1], stroke: l[2], 'shape-rendering': 'crispEdges'});
});
line(1841, 166.5, 1849, 166.5, '#003800');
line(1841, 822.5, 1849, 822.5, LIME);
line(1841, 906.5, 1849, 906.5, YELLOW);
line(1841, 1052.5, 1849, 1052.5, CYAN);

[[866, LIME], [1071, YELLOW]].forEach(function (v) {
    add('rect', {x: 1897, y: v[0], width: 12, height: 12, rx: 1.5, fill: v[1]});
    add('path', {d: 'M1900 ' + (v[0] + 3) + 'l3 6l3-6', fill: 'none', stroke: '#222'});
});
add('rect', {x: 1735.5, y: 1088.5, width: 88, height: 11, rx: 2, fill: '#004000', stroke: LIME});
label('7/22/2011 15:14', 1738, 1098, 84, '#fff');
```
